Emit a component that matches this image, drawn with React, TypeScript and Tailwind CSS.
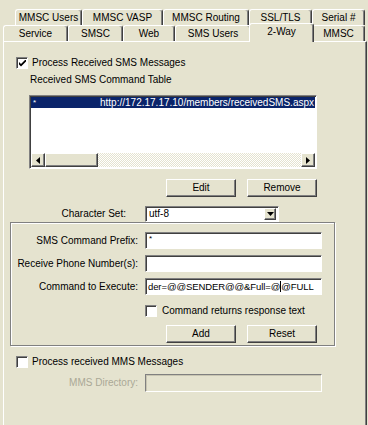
import React from 'react';

const raised = 'border border-t-white border-l-white border-r-[#404040] border-b-[#404040] shadow-[inset_-1px_-1px_0_#808080]';
const sunken = 'border border-t-[#808080] border-l-[#808080] border-r-white border-b-white shadow-[inset_1px_1px_0_#404040]';
const tabBase = 'flex items-center justify-center border-t border-l border-r border-t-white border-l-white border-r-[#404040] rounded-t-[3px] shadow-[inset_-1px_0_0_#808080]';

export default function App() {
  return (
    <div className="w-[368px] h-[425px] overflow-hidden bg-[#e5e3cf] pt-[9px] font-['Liberation_Sans',Arial,sans-serif] text-[10px] leading-[12px] text-black">
      {/* Tabs, back row */}
      <div className="flex ml-[15px] h-[16px]">
        <div className={`${tabBase} w-[67px]`}>MMSC Users</div>
        <div className={`${tabBase} w-[81px]`}>MMSC VASP</div>
        <div className={`${tabBase} w-[86px]`}>MMSC Routing</div>
        <div className={`${tabBase} w-[63px]`}>SSL/TLS</div>
        <div className={`${tabBase} w-[53px]`}>Serial #</div>
      </div>
      {/* Tabs, front row */}
      <div className="flex items-end ml-[3px] h-[16px]">
        <div className={`${tabBase} h-[16px] w-[65px]`}>Service</div>
        <div className={`${tabBase} h-[16px] w-[55px]`}>SMSC</div>
        <div className={`${tabBase} h-[16px] w-[52px]`}>Web</div>
        <div className={`${tabBase} h-[16px] w-[76px]`}>SMS Users</div>
        <div className={`${tabBase} relative top-px z-10 -mx-[2px] h-[19px] w-[65px] pb-[3px] bg-[#e5e3cf]`}>2-Way</div>
        <div className={`${tabBase} h-[16px] w-[53px]`}>MMSC</div>
      </div>

      {/* Page */}
      <div className="ml-[3px] w-[364px] h-[400px] border-t border-l border-white border-r border-r-[#404040] shadow-[inset_-1px_0_0_#808080]">
        <div className="mt-[15px] ml-[12px] flex items-center h-[12px] gap-[4px]">
          <Check checked />
          <span>Process Received SMS Messages</span>
        </div>
        <p className="mt-[5px] ml-[26px]">Received SMS Command Table</p>

        {/* Command table */}
        <div className={`${sunken} mt-[9px] ml-[25px] w-[288px] h-[74px] bg-white p-px flex flex-col`}>
          <div className="flex h-[11px] items-center bg-[#0a246a] text-white overflow-hidden whitespace-nowrap">
            <span className="w-[69px] pl-[2px] text-[8px]">*</span>
            <span>http://172.17.17.10/members/receivedSMS.aspx</span>
          </div>
          <div className="flex-1" />
          <div className="flex h-[14px]">
            <ScrollBtn dir="left" />
            <div className={`${raised} w-[53px] bg-[#e5e3cf]`} />
            <div className="flex-1 bg-[repeating-conic-gradient(#ffffff_0%_25%,#e5e3cf_0%_50%)] bg-[length:2px_2px]" />
            <ScrollBtn dir="right" />
          </div>
        </div>

        <div className="mt-[10px] ml-[162px] flex gap-[11px]">
          <Btn label="Edit" />
          <Btn label="Remove" />
        </div>

        {/* Character set */}
        <div className="mt-[9px] flex items-center h-[16px]">
          <span className="w-[122px] text-right">Character Set:</span>
          <div className={`${sunken} ml-[19px] w-[134px] h-[16px] bg-white flex items-center pl-[3px] pr-[2px]`}>
            <span className="flex-1">utf-8</span>
            <div className={`${raised} w-[12px] h-[12px] bg-[#e5e3cf] flex items-center justify-center`}>
              <svg width="7" height="4" viewBox="0 0 7 4"><path d="M0 0h7L3.5 4z" fill="black" /></svg>
            </div>
          </div>
        </div>

        {/* Command group */}
        <div className="ml-[6px] w-[325px] border border-[#808080] shadow-[inset_1px_1px_0_white,1px_1px_0_white] pt-[9px] pb-[2px]">
          <Row label="SMS Command Prefix:" value="*" small />
          <Row label="Receive Phone Number(s):" value="" className="mt-[6px]" />
          <div className="mt-[6px] flex items-center">
            <span className="w-[127px] text-right">Command to Execute:</span>
            <div className={`${sunken} ml-[7px] w-[177px] h-[17px] bg-white flex items-center pl-[2px] overflow-hidden whitespace-nowrap text-[9.5px] tracking-[-0.1px]`}>
              <span>der=@@SENDER@@&amp;Full=@</span>
              <span className="w-px h-[11px] bg-black" />
              <span>@FULL</span>
            </div>
          </div>
          <div className="mt-[10px] ml-[134px] flex items-center h-[12px] gap-[5px]">
            <Check />
            <span>Command returns response text</span>
          </div>
          <div className="mt-[8px] ml-[155px] flex gap-[11px]">
            <Btn label="Add" />
            <Btn label="Reset" />
          </div>
        </div>

        <div className="mt-[10px] ml-[12px] flex items-center h-[12px] gap-[4px]">
          <Check />
          <span>Process received MMS Messages</span>
        </div>
        <div className="mt-[6px] flex items-center">
          <span className="w-[134px] text-right text-[#aaa896]">MMS Directory:</span>
          <div className={`${sunken} ml-[7px] w-[177px] h-[18px] bg-[#e5e3cf] shadow-[inset_1px_1px_0_#c8c5b2]`} />
        </div>
      </div>
    </div>
  );
}

function Row({ label, value, small, className = '' }: { label: string; value: string; small?: boolean; className?: string }) {
  return (
    <div className={`flex items-center ${className}`}>
      <span className="w-[127px] text-right">{label}</span>
      <div className={`${sunken} ml-[7px] w-[177px] h-[17px] bg-white flex items-start pl-[3px] pt-[1px]`}>
        <span className={small ? 'text-[8px] leading-[9px]' : ''}>{value}</span>
      </div>
    </div>
  );
}

function Btn({ label }: { label: string }) {
  return (
    <div className={`${raised} w-[70px] h-[18px] flex items-center justify-center bg-[#e5e3cf]`}>
      {label}
    </div>
  );
}

function Check({ checked }: { checked?: boolean }) {
  return (
    <div className={`${sunken} w-[12px] h-[12px] bg-white flex items-center justify-center`}>
      {checked && (
        <svg width="7" height="7" viewBox="0 0 7 7">
          <path d="M0 2L2 4L7 -1V1.5L2 6.5L0 4.5Z" fill="black" />
        </svg>
      )}
    </div>
  );
}

function ScrollBtn({ dir }: { dir: 'left' | 'right' }) {
  return (
    <div className={`${raised} w-[14px] h-[14px] bg-[#e5e3cf] flex items-center justify-center`}>
      <svg width="4" height="7" viewBox="0 0 4 7">
        <path d={dir === 'left' ? 'M4 0V7L0 3.5Z' : 'M0 0V7L4 3.5Z'} fill="black" />
      </svg>
    </div>
  );
}
